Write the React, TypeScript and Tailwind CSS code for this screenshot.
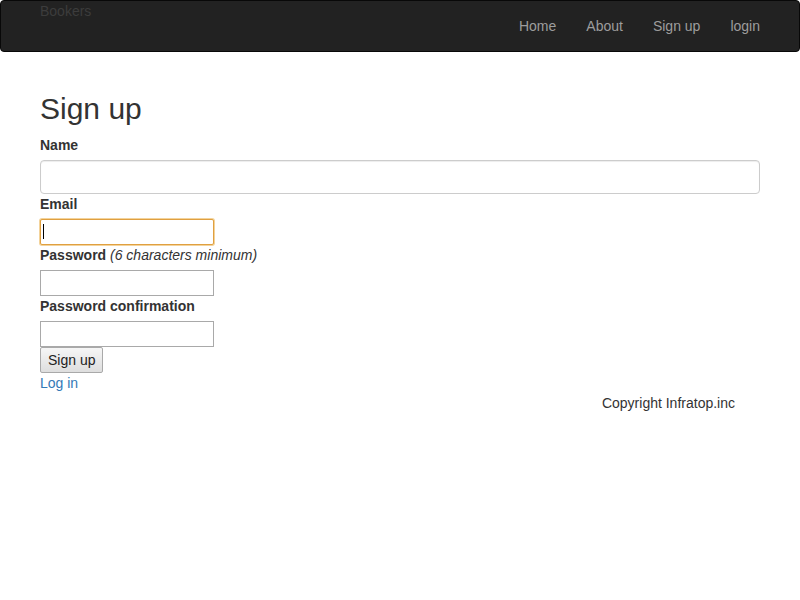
import React from 'react';

const navLinks = ['Home', 'About', 'Sign up', 'login'];

const PlainInput: React.FC<{ focused?: boolean }> = ({ focused }) => (
  <div
    className={
      focused
        ? 'relative w-[174px] h-[26px] border border-[#e0a040] rounded-[2px] shadow-[0_0_0_1px_#f3d39b] bg-white'
        : 'w-[174px] h-[26px] border border-[#a9a9a9] bg-white'
    }
  >
    {focused && <span className="absolute left-[2px] top-[4px] w-px h-[15px] bg-black" />}
  </div>
);

export default function App() {
  return (
    <div className="min-h-[600px] bg-white text-[#333] text-[14px] leading-[20px] font-['Liberation_Sans',Arial,sans-serif]">
      <nav className="h-[52px] bg-[#222] border border-[#080808] rounded-[4px] flex items-start">
        <span className="pl-[39px] leading-[20px] text-[#3c3c3c]">Bookers</span>
        <ul className="ml-auto pr-[24px] flex">
          {navLinks.map((l) => (
            <li key={l} className="px-[15px] py-[15px] text-[#9d9d9d]">
              {l}
            </li>
          ))}
        </ul>
      </nav>

      <main className="px-[40px] pt-[37px]">
        <h1 className="text-[30px] leading-[40px] font-normal mb-[6px]">Sign up</h1>

        <label className="block font-bold mb-[5px]">Name</label>
        <div className="h-[34px] border border-[#ccc] rounded-[4px] shadow-[inset_0_1px_1px_rgba(0,0,0,0.075)]" />

        <label className="block font-bold mb-[5px]">Email</label>
        <PlainInput focused />

        <label className="block mb-[5px]">
          <span className="font-bold">Password</span> <em>(6 characters minimum)</em>
        </label>
        <PlainInput />

        <label className="block font-bold mb-[5px]">Password confirmation</label>
        <PlainInput />

        <button className="h-[26px] px-[7px] border border-[#a9a9a9] rounded-[2px] bg-gradient-to-b from-[#f6f6f6] to-[#dedede] text-[#222] leading-[20px]">
          Sign up
        </button>

        <div>
          <a className="text-[#337ab7]">Log in</a>
        </div>

        <footer className="flex justify-end pr-[25px]">
          <span>Copyright Infratop.inc</span>
        </footer>
      </main>
    </div>
  );
}
